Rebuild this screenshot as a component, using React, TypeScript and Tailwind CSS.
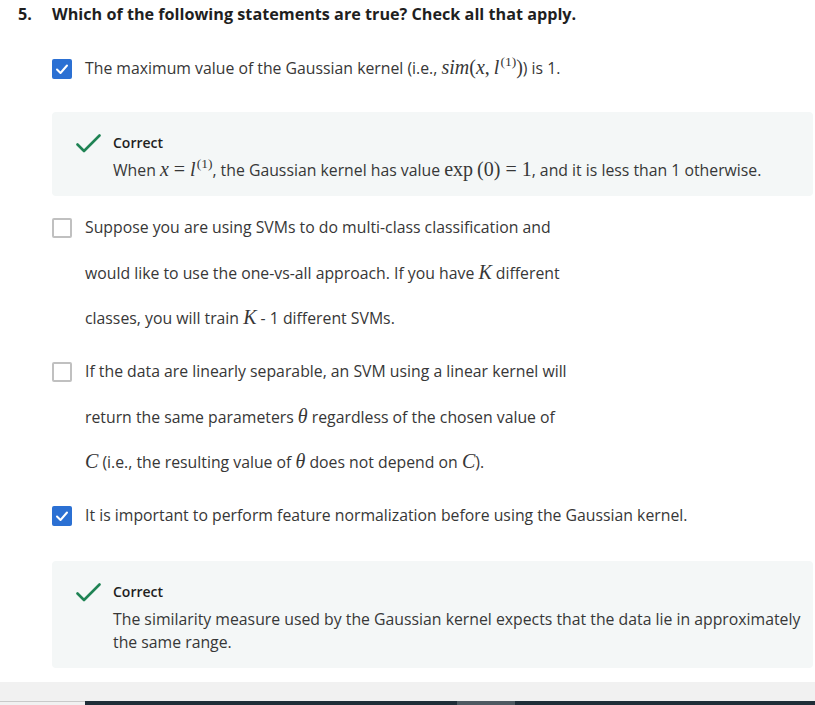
import React from "react";

const serif = "font-['Liberation_Serif','DejaVu_Serif',serif]";

function Mi({ children }: { children: React.ReactNode }) {
  return <span className={`${serif} italic text-[20px] leading-none`}>{children}</span>;
}
function Mu({ children }: { children: React.ReactNode }) {
  return <span className={`${serif} text-[20px] leading-none`}>{children}</span>;
}
function Eq() {
  return <span className={`${serif} text-[20px] leading-none mx-[5px]`}>=</span>;
}
function Sup1() {
  return (
    <span className={`${serif} not-italic text-[13.5px] leading-none relative -top-[8px] ml-[1px]`}>(1)</span>
  );
}

function CheckBox({ checked }: { checked: boolean }) {
  if (checked) {
    return (
      <div className="w-[20px] h-[20px] rounded-[2px] bg-[#2b70d3] flex items-center justify-center shrink-0">
        <svg width="14" height="14" viewBox="0 0 14 14" fill="none">
          <path d="M2 7.5 L5.5 11 L12 3.5" stroke="white" strokeWidth="2" strokeLinecap="round" strokeLinejoin="round" />
        </svg>
      </div>
    );
  }
  return <div className="w-[20px] h-[20px] rounded-[2px] border-2 border-[#c0c0c0] bg-white shrink-0" />;
}

function Option({ checked, lines, className = "" }: { checked: boolean; lines: React.ReactNode[]; className?: string }) {
  return (
    <div className={`flex items-start pl-[52px] ${className}`}>
      <div className="mt-[12.75px]">
        <CheckBox checked={checked} />
      </div>
      <div className="ml-[13px] text-[15.8px] leading-[45.5px] text-[#373737]">
        {lines.map((l, i) => (
          <div key={i} className="whitespace-nowrap">{l}</div>
        ))}
      </div>
    </div>
  );
}

function Feedback({ children, className = "" }: { children: React.ReactNode; className?: string }) {
  return (
    <div className={`ml-[52px] w-[761px] rounded-[4px] bg-[#f4f7f7] flex pt-[21px] pb-[14px] ${className}`}>
      <div className="w-[61px] shrink-0 flex justify-end pr-[12px] pt-[1px]">
        <svg width="25" height="20" viewBox="0 0 25 20" fill="none">
          <path d="M1.5 10.5 L8 17 L23.5 1.5" stroke="#1f8354" strokeWidth="2.6" strokeLinecap="round" strokeLinejoin="round" />
        </svg>
      </div>
      <div className="flex-1 pr-[8px]">
        <div className="text-[14px] leading-[20px] font-semibold text-[#1f1f1f]">Correct</div>
        <div className="mt-[6px] text-[15.8px] leading-[23px] text-[#373737]">{children}</div>
      </div>
    </div>
  );
}

export default function App() {
  return (
    <div className="w-[815px] h-[705px] bg-white overflow-hidden flex flex-col font-['Open_Sans','Noto_Sans',sans-serif]">
      <div className="h-[28px] flex items-center text-[16.2px] font-bold text-[#1f1f1f] shrink-0">
        <div className="w-[52px] pl-[18px]">5.</div>
        <div>Which of the following statements are true? Check all that apply.</div>
      </div>

      <Option
        className="mt-[18px]"
        checked
        lines={[
          <>
            The maximum value of the Gaussian kernel (i.e.,{" "}
            <Mi>sim</Mi>
            <Mu>(</Mu>
            <Mi>x</Mi>
            <Mu>,&thinsp;</Mu>
            <Mi>l</Mi>
            <Sup1 />
            <Mu>)</Mu>) is 1.
          </>,
        ]}
      />

      <Feedback className="mt-[20.5px]">
        When <Mi>x</Mi>
        <Eq />
        <Mi>l</Mi>
        <Sup1 />, the Gaussian kernel has value <Mu>exp&thinsp;(0)</Mu>
        <Eq />
        <Mu>1</Mu>, and it is less than 1 otherwise.
      </Feedback>

      <Option
        className="mt-[9.25px]"
        checked={false}
        lines={[
          "Suppose you are using SVMs to do multi-class classification and",
          <>
            would like to use the one-vs-all approach. If you have <Mi>K</Mi> different
          </>,
          <>
            classes, you will train <Mi>K</Mi> - 1 different SVMs.
          </>,
        ]}
      />

      <Option
        className="mt-[7.5px]"
        checked={false}
        lines={[
          "If the data are linearly separable, an SVM using a linear kernel will",
          <>
            return the same parameters <Mi>θ</Mi> regardless of the chosen value of
          </>,
          <>
            <Mi>C</Mi> (i.e., the resulting value of <Mi>θ</Mi> does not depend on <Mi>C</Mi>).
          </>,
        ]}
      />

      <Option
        className="mt-[7.5px]"
        checked
        lines={["It is important to perform feature normalization before using the Gaussian kernel."]}
      />

      <Feedback className="mt-[22.25px]">
        The similarity measure used by the Gaussian kernel expects that the data lie in approximately the same range.
      </Feedback>

      <div className="mt-[14px] flex-1 flex flex-col bg-[#f1f1f1]">
        <div className="h-[18.5px] shrink-0" />
        <div className="flex-1 flex">
          <div className="w-[85px] border-t border-[#c9c9c9]" />
          <div className="flex-1 flex">
            <div className="w-[372px] bg-[#1f2e38]" />
            <div className="w-[58px] bg-[#4e5a62]" />
            <div className="flex-1 bg-[#1f2e38]" />
          </div>
        </div>
      </div>
    </div>
  );
}
